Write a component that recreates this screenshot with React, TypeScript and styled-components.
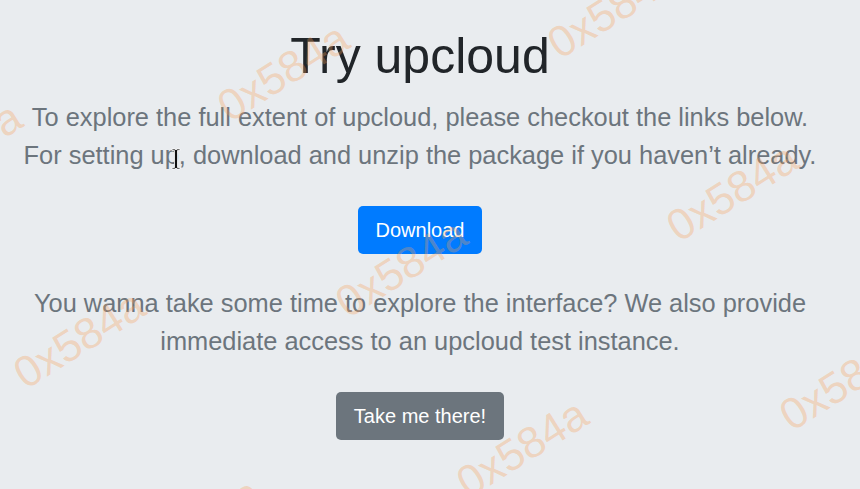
import React from "react";
import styled, { createGlobalStyle } from "styled-components";

const GlobalStyle = createGlobalStyle`
  html, body {
    margin: 0;
    padding: 0;
    background: #e9ecef;
    font-family: "Liberation Sans", Arial, sans-serif;
  }
  body {
    overflow: hidden;
  }
`;

const Page = styled.div`
  position: relative;
  width: 860px;
  height: 489px;
  overflow: hidden;
  background: #e9ecef;
`;

const Main = styled.main`
  width: 840px;
  display: flex;
  flex-direction: column;
  align-items: center;
  text-align: center;
  padding-top: 26px;
`;

const Title = styled.h1`
  margin: 0;
  font-family: "Liberation Sans", Arial, sans-serif;
  font-weight: 400;
  font-size: 50px;
  line-height: 1.2;
  color: #212529;
`;

const Lead = styled.p<{ $top: number }>`
  margin: ${(p) => p.$top}px 0 0;
  font-family: "Liberation Sans", Arial, sans-serif;
  font-size: 25.4px;
  line-height: 38px;
  color: #6c757d;
`;

const Line = styled.span`
  display: block;
  white-space: nowrap;
`;

const Button = styled.a<{ $variant: "primary" | "secondary"; $top: number }>`
  display: inline-block;
  margin-top: ${(p) => p.$top}px;
  padding: 9px 17.5px;
  font-family: "Liberation Sans", Arial, sans-serif;
  font-size: 20px;
  line-height: 30px;
  color: #ffffff;
  text-decoration: none;
  border-radius: 5px;
  background: ${(p) => (p.$variant === "primary" ? "#007bff" : "#6c757d")};
  cursor: pointer;
`;

const WatermarkLayer = styled.div`
  position: absolute;
  inset: 0;
  pointer-events: none;
  overflow: hidden;
`;

const Mark = styled.span<{ $x: number; $y: number }>`
  position: absolute;
  left: ${(p) => p.$x}px;
  top: ${(p) => p.$y}px;
  transform: translate(-50%, -50%) rotate(-32deg);
  font-family: "Liberation Sans", Arial, sans-serif;
  font-size: 44px;
  line-height: 1;
  white-space: nowrap;
  color: rgba(247, 160, 90, 0.32);
`;

const Cursor = styled.svg`
  position: absolute;
  left: 171px;
  top: 148px;
  pointer-events: none;
`;

const marks: Array<[number, number]> = [
  [283, 72],
  [732, 192],
  [401, 268],
  [79, 339],
  [522, 448],
  [845, 381],
  [613, 9],
  [-44, 151],
  [195, 527],
];

export default function App() {
  return (
    <Page>
      <GlobalStyle />
      <Main>
        <Title>Try upcloud</Title>
        <Lead $top={12}>
          <Line>To explore the full extent of upcloud, please checkout the links below.</Line>
          <Line>For setting up, download and unzip the package if you haven’t already.</Line>
        </Lead>
        <Button $variant="primary" $top={32}>
          Download
        </Button>
        <Lead $top={30}>
          You wanna take some time to explore the interface? We also provide immediate
          access to an upcloud test instance.
        </Lead>
        <Button $variant="secondary" $top={32}>
          Take me there!
        </Button>
      </Main>
      <WatermarkLayer>
        {marks.map(([x, y], i) => (
          <Mark key={i} $x={x} $y={y}>
            0x584a
          </Mark>
        ))}
      </WatermarkLayer>
      <Cursor width="10" height="23" viewBox="0 0 10 23">
        <path
          d="M1 1h3l1 1 1-1h3v1.5H6.5v17H9V21H6l-1-1-1 1H1v-1.5h2.5v-17H1z"
          fill="#111"
          stroke="#fff"
          strokeWidth="0.8"
        />
      </Cursor>
    </Page>
  );
}
